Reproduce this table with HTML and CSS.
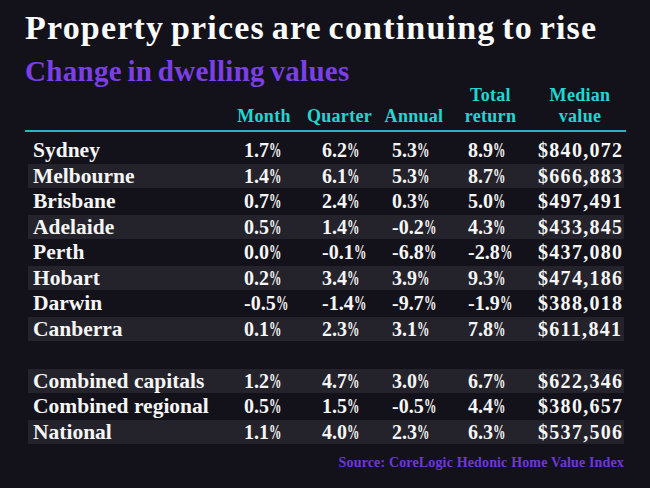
FILE: index.html
```html
<!DOCTYPE html>
<html lang="en">
<head>
<meta charset="utf-8">
<title>Property prices are continuing to rise</title>
<link rel="stylesheet" href="styles.css">
</head>
<body>
<div class="chart">
  <h1 class="title">Property prices are continuing to rise</h1>
  <h2 class="subtitle">Change in dwelling values</h2>
  <div class="head">
    <div></div>
    <div class="hcell">Month</div>
    <div class="hcell">Quarter</div>
    <div class="hcell">Annual</div>
    <div class="hcell">Total<br>return</div>
    <div class="hcell hmed">Median<br>value</div>
  </div>
  <div class="groups">
    <div class="group g1">
      <div class="row"><div class="name">Sydney</div><div class="c1">1.7<span class="pct">%</span></div><div class="c2">6.2<span class="pct">%</span></div><div class="c3">5.3<span class="pct">%</span></div><div class="c4">8.9<span class="pct">%</span></div><div class="c5">$840,072</div></div>
      <div class="row"><div class="name">Melbourne</div><div class="c1">1.4<span class="pct">%</span></div><div class="c2">6.1<span class="pct">%</span></div><div class="c3">5.3<span class="pct">%</span></div><div class="c4">8.7<span class="pct">%</span></div><div class="c5">$666,883</div></div>
      <div class="row"><div class="name">Brisbane</div><div class="c1">0.7<span class="pct">%</span></div><div class="c2">2.4<span class="pct">%</span></div><div class="c3">0.3<span class="pct">%</span></div><div class="c4">5.0<span class="pct">%</span></div><div class="c5">$497,491</div></div>
      <div class="row"><div class="name">Adelaide</div><div class="c1">0.5<span class="pct">%</span></div><div class="c2">1.4<span class="pct">%</span></div><div class="c3">-0.2<span class="pct">%</span></div><div class="c4">4.3<span class="pct">%</span></div><div class="c5">$433,845</div></div>
      <div class="row"><div class="name">Perth</div><div class="c1">0.0<span class="pct">%</span></div><div class="c2">-0.1<span class="pct">%</span></div><div class="c3">-6.8<span class="pct">%</span></div><div class="c4">-2.8<span class="pct">%</span></div><div class="c5">$437,080</div></div>
      <div class="row"><div class="name">Hobart</div><div class="c1">0.2<span class="pct">%</span></div><div class="c2">3.4<span class="pct">%</span></div><div class="c3">3.9<span class="pct">%</span></div><div class="c4">9.3<span class="pct">%</span></div><div class="c5">$474,186</div></div>
      <div class="row"><div class="name">Darwin</div><div class="c1">-0.5<span class="pct">%</span></div><div class="c2">-1.4<span class="pct">%</span></div><div class="c3">-9.7<span class="pct">%</span></div><div class="c4">-1.9<span class="pct">%</span></div><div class="c5">$388,018</div></div>
      <div class="row"><div class="name">Canberra</div><div class="c1">0.1<span class="pct">%</span></div><div class="c2">2.3<span class="pct">%</span></div><div class="c3">3.1<span class="pct">%</span></div><div class="c4">7.8<span class="pct">%</span></div><div class="c5">$611,841</div></div>
    </div>
    <div class="group g2">
      <div class="row"><div class="name">Combined capitals</div><div class="c1">1.2<span class="pct">%</span></div><div class="c2">4.7<span class="pct">%</span></div><div class="c3">3.0<span class="pct">%</span></div><div class="c4">6.7<span class="pct">%</span></div><div class="c5">$622,346</div></div>
      <div class="row"><div class="name">Combined regional</div><div class="c1">0.5<span class="pct">%</span></div><div class="c2">1.5<span class="pct">%</span></div><div class="c3">-0.5<span class="pct">%</span></div><div class="c4">4.4<span class="pct">%</span></div><div class="c5">$380,657</div></div>
      <div class="row"><div class="name">National</div><div class="c1">1.1<span class="pct">%</span></div><div class="c2">4.0<span class="pct">%</span></div><div class="c3">2.3<span class="pct">%</span></div><div class="c4">6.3<span class="pct">%</span></div><div class="c5">$537,506</div></div>
    </div>
  </div>
  <p class="source">Source: CoreLogic Hedonic Home Value Index</p>
</div>
</body>
</html>
```

FILE: styles.css
```css
html, body {
  margin: 0;
  padding: 0;
  background: #13121b;
}

body {
  width: 650px;
  height: 488px;
  overflow: hidden;
  font-family: "Liberation Serif", "Times New Roman", serif;
  font-weight: 700;
  color: #f6f6f6;
}

.chart {
  padding: 10px 24px 0 25px;
}

.title {
  margin: 0;
  font-size: 34px;
  line-height: 36px;
  letter-spacing: 1.2px;
  word-spacing: -3px;
  color: #fcfcfc;
}

.subtitle {
  margin: 11px 0 0;
  font-size: 29px;
  line-height: 28px;
  letter-spacing: 0.3px;
  word-spacing: -2px;
  color: #7b3fe6;
}

.head {
  display: grid;
  grid-template-columns: 201px 76px 75px 74px 79px 96px;
  align-items: end;
  padding-bottom: 3px;
  border-bottom: 2px solid #1fb9bb;
  font-size: 18px;
  line-height: 21px;
  letter-spacing: 0.3px;
  color: #22d6d2;
}

.hcell {
  text-align: center;
}

.hmed {
  padding-left: 4px;
}

.groups {
  display: flex;
  flex-direction: column;
  gap: 28px;
  margin: 6px 2px 0 3px;
}

.group {
  display: flex;
  flex-direction: column;
  gap: 1.5px;
}

.row {
  display: grid;
  grid-template-columns: 198px 76px 75px 74px 79px 94px;
  align-items: center;
  height: 24px;
  font-size: 20px;
  line-height: 22px;
  white-space: nowrap;
}

.g1 .row:nth-child(even),
.g2 .row:nth-child(odd) {
  background: #24232c;
}

.name {
  padding-left: 5px;
  font-size: 21.5px;
}

.c1 { padding-left: 18px; }
.c2 { padding-left: 20px; }
.c3 { padding-left: 15px; }
.c4 { padding-left: 17px; }
.c5 { padding-left: 8px; letter-spacing: 1.3px; }

.pct {
  display: inline-block;
  transform: scaleX(0.62);
  transform-origin: left center;
  margin-right: -7.6px;
}

.source {
  margin: 11px 2px 0 0;
  text-align: right;
  font-size: 14px;
  line-height: 16px;
  letter-spacing: 0.15px;
  color: #6e37d9;
}
```
